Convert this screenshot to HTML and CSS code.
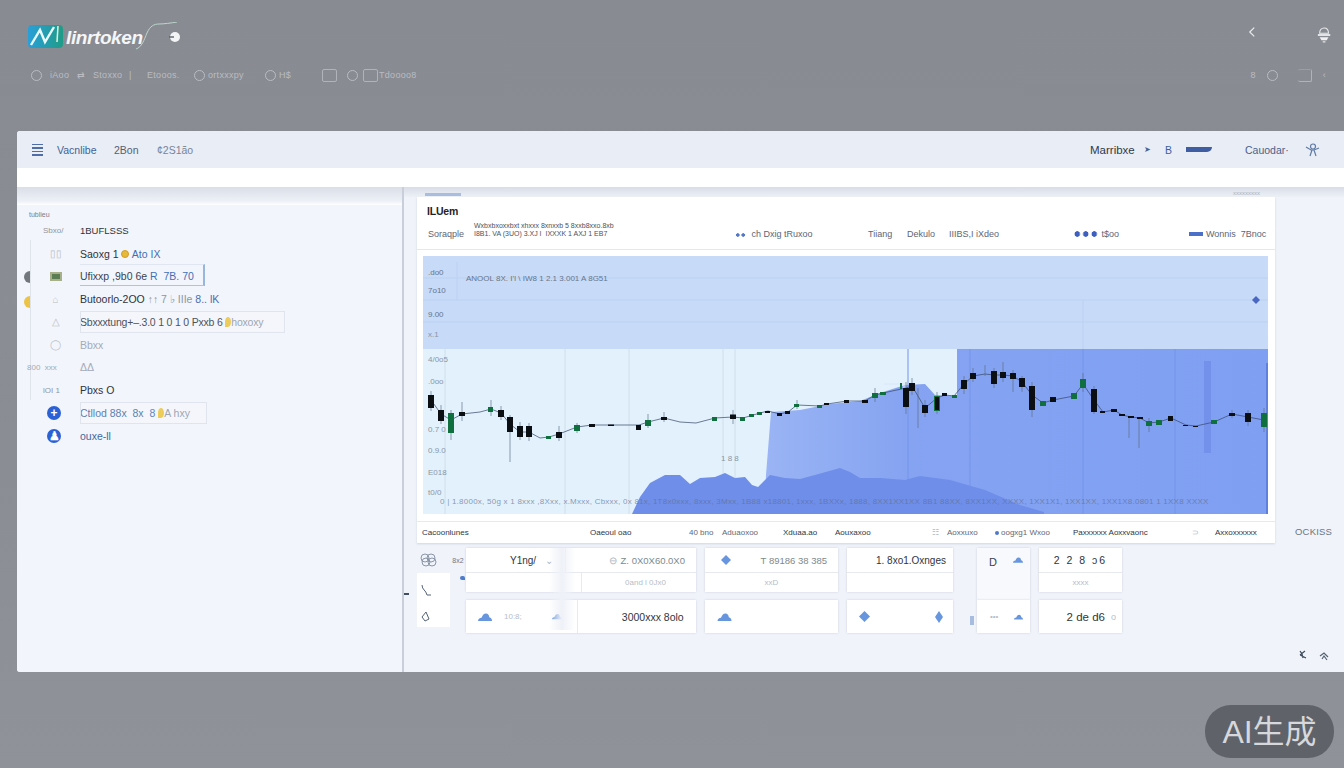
FILE: index.html
```html
<!DOCTYPE html>
<html lang="en">
<head>
<meta charset="utf-8">
<title>Mintoken</title>
<link rel="stylesheet" href="styles.css">
</head>
<body>
<svg class="defs" width="0" height="0" aria-hidden="true">
  <symbol id="cloud" viewBox="0 0 14 8"><path d="M0 8c0-2 1.500-3 3.500-3.200C4.500 2 6 .5 8 .5s3.200 1.800 3.300 3.800C13 4.600 14 6 14 8z"/></symbol>
  <symbol id="gem" viewBox="0 0 12 12" preserveAspectRatio="none"><path d="M6 0l6 6-6 6-6-6z"/></symbol>
</svg>

<header class="top">
  <div class="brand-row">
    <svg class="logo" width="160" height="30" viewBox="0 0 160 30">
      <defs><linearGradient id="lg" x1="0" x2="1"><stop offset="0" stop-color="#2a9fd8"/><stop offset="1" stop-color="#1f9c86"/></linearGradient></defs>
      <rect x="0" y="3" width="35" height="23" rx="4" fill="url(#lg)"/>
      <path d="M3 23L12 8l5 12 9-15" fill="none" stroke="#e8fbff" stroke-width="2.4"/>
      <path d="M30 4l-1 16" stroke="#e6f2d8" stroke-width="1.5"/>
      <path d="M108 27c6-2 8-9 11-16 3-7 7-9 12-9 5 0 12-1 18-2" fill="none" stroke="#bcd6cc" stroke-width="1"/>
      <circle cx="147" cy="15" r="5" fill="#f2f4f5"/>
      <path d="M141 15h5" stroke="#5d6168" stroke-width="1.4"/>
    </svg>
    <span class="wordmark">Iinrtoken</span>
    <svg class="chev" width="10" height="12" viewBox="0 0 10 12"><path d="M7 1L2 6l5 5" fill="none" stroke="#eceef0" stroke-width="1.3"/></svg>
    <svg class="lamp" width="16" height="20" viewBox="0 0 16 20"><path d="M3 8c0-4 2-6 5-6s5 2 5 6z" fill="none" stroke="#e8eaec" stroke-width="1.2"/><path d="M1 9h14v2H1z" fill="#eff0f2"/><path d="M3 12.500h10L11 16H5z" fill="#eff0f2"/><path d="M6.500 17h3v1.500h-3z" fill="#e0e2e4"/></svg>
  </div>
  <nav class="subnav">
    <span class="ring"></span><span class="n1">iAoo</span><span class="n2">⇄</span><span class="n3">Stoxxo</span><span class="n4">|</span><span class="n5">Etooos.</span>
    <span class="ring n6"></span><span class="n7">ortxxxpy</span><span class="ring n8"></span><span class="n9">H$</span>
    <span class="sq n10"></span><span class="ring n11"></span><span class="sq n12"></span><span class="n13">Tdoooo8</span>
    <span class="sub-right"><span>8</span><span class="ring"></span><span class="sq wide"></span><span>‹</span></span>
  </nav>
</header>

<section class="panel">
  <div class="bar">
    <span class="menu"><i></i><i></i><i></i><i></i></span>
    <span class="bar-link l1">Vacnlibe</span><span class="bar-link l2">2Bon</span><span class="bar-link l3">¢2S1ão</span>
    <span class="bar-right">
      <b class="mar">Marribxe</b><span class="arrow">➤</span><span class="bee">B</span><span class="flag"></span><span class="cal">Cauodar·</span>
      <svg width="15" height="14" viewBox="0 0 15 14"><circle cx="8" cy="3.500" r="2.500" fill="none" stroke="#5f7aa5" stroke-width="1.200"/><path d="M1 4l5 3 3 0 5-2M5 13l2-6M11 13L9 7" fill="none" stroke="#5f7aa5" stroke-width="1.200"/></svg>
    </span>
  </div>
  <div class="strip"></div>
  <div class="work">
    <aside class="side">
      <div class="side-shade"></div>
      <p class="side-cap">tublieu</p>
      <ul class="rows">
        <li><span class="ic txt">Sbxo/</span><span class="lab dark caps">1BUFLSSS</span></li>
        <li><span class="ic">▯▯</span><span class="lab dark">Saoxg 1 <i class="coin"></i> <em>Ato IX</em></span></li>
        <li class="boxed-blue"><span class="ic chip"></span><span class="lab">Ufixxp ,9b0 6e <em>R &nbsp;7B. 70</em></span></li>
        <li><span class="ic">⌂</span><span class="lab dark">Butoorlo-2OO <u>↑↑ 7 ♭ IIIe</u> <em>8.. lK</em></span></li>
        <li class="boxed"><span class="ic">△</span><span class="lab dark tight-lab">Sbxxxtung+–.3.0 1 0 1 0 Pxxb 6 <i class="tag"></i><u>hoxoxy</u></span></li>
        <li><span class="ic">◯</span><span class="lab faint">Bbxx</span></li>
        <li><span class="ic">&nbsp;</span><span class="lab faint">ΔΔ</span></li>
        <li><span class="ic txt">lOI 1</span><span class="lab dark">Pbxs O</span></li>
        <li class="boxed short"><span class="ic blue">+</span><span class="lab blue-lab">Ctllod 88x &nbsp;8x &nbsp;<em>8</em> <i class="tag"></i><u>A hxy</u></span></li>
        <li><span class="ic blue">♟</span><span class="lab blue-lab">ouxe-ll</span></li>
      </ul>
      <span class="rail"></span><span class="dot grey"></span><span class="dot amber"></span>
      <span class="side-note">800 &nbsp;xxx</span>
    </aside>

    <main class="main">
      <div class="shade"><i class="tab-line"></i><span class="shade-note">xxxxxxxxx</span></div>
      <div class="card-row">
        <article class="card">
          <h2 class="card-title">ILUem</h2>
          <div class="card-head">
            <span>Soraqple</span>
            <span class="two"><b>Wxbxbxoxxbxt xhxxx 8xnxxb 5 8xxb8xxo.8xb</b><br>I8B1. VA (3UO) 3.XJ I &nbsp;IXXXK 1 AXJ 1 EB7</span>
            <span><i class="dots"></i> ch Dxig tRuxoo</span>
            <span>Tiiang</span><span>Dekulo</span><span>IIIBS,I iXdeo</span>
            <span><i class="dots long"></i> t$oo</span>
            <span><i class="barlet"></i>Wonnis &nbsp;7Bnoc</span>
          </div>
          <div class="chart">
            <svg viewBox="423 256 845 258" width="845" height="258">
              <defs>
                <linearGradient id="areaL" x1="0" x2="1" y1="0" y2="0"><stop offset="0" stop-color="#9ab4f4"/><stop offset=".28" stop-color="#85a3f1"/><stop offset="1" stop-color="#7f9ff3"/></linearGradient>
              </defs>
              <rect x="423" y="256" width="845" height="93" fill="#c7daf8"/>
              <rect x="423" y="349" width="845" height="165" fill="#e2f1fc"/>
              <path class="grid-top" d="M423 278H1268M423 300H1268M423 322H1268M457 262V300M1083 300V349"/>
              <path class="grid" d="M445 349V514M565 349V514M629 349V514M723 349V514M735 349V514"/>
              <path d="M771 412L800 410 830 404 860 401 880 393 905 385 925 384 935 395 957 396V349H1268V514H765L766 475z" fill="url(#areaL)"/>
              <path class="grid-blue" d="M908 349V514M970 349V514M1083 349V514M1175 349V514"/>
              <rect x="1204" y="361" width="7" height="92" fill="#7391ea"/>
              <rect x="1266" y="363" width="3" height="151" fill="#5f80dc"/>
              <path d="M632 514L640 497 650 483 665 475 680 475 690 484 700 478 715 477 725 473 735 478 745 477 752 485 758 487 770 475 785 478 800 479 815 475 840 468 850 472 860 478 880 478 905 480 920 476 950 480 985 490 1020 505 1044 512V514z" fill="#6e8ee9"/>
              <path d="M884 383h22v24h-3v-22h-19z" fill="#dbe6f8" fill-opacity=".55"/>
              <text class="ax" x="428" y="275">.do0</text><text class="ax" x="428" y="293">7o10</text><text class="ax" x="428" y="317">9.00</text><text class="ax fa" x="428" y="337">x.1</text>
              <text class="ax" x="466" y="281">ANOOL 8X.  I'I \  IW8 1 2.1 3.001 A 8G51</text>
              <text class="ax fa" x="428" y="362">4/0o5</text><text class="ax fa" x="428" y="384">.0oo</text><text class="ax fa" x="428" y="432">0.7 0</text><text class="ax fa" x="428" y="453">0.9.0</text><text class="ax fa" x="428" y="475">E018</text><text class="ax fa" x="428" y="495">t0/0</text>
              <text class="axb" x="440" y="504">0 | 1.8000x, 50g x 1 8xxx ,8Xxx, x.Mxxx, Cbxxx, 0x 81x, 1T8x0xxx, 8xxx, 3Mxx, 1B88 x18801, 1xxx, 1BXXx, 1888, 8XX1XX1XX 8B1 88XX, 8XX1XX, XXXX, 1XX1X1, 1XX1XX, 1XX1X8.0801 1 1XX8 XXXX</text>
              <text class="ax fa" x="721" y="461">1 8 8</text>
              <path class="price" d="M431 400L441 414 451 420 462 414 480 412 491 409 501 413 510 424 520 432 529 432 540 438 549 437 559 434 577 427 592 425 611 425 639 425 648 422 664 418 680 422 696 423 715 418 733 417 743 418 760 413 768 411 780 414 788 412 797 405 820 406 827 404 847 401 865 401 875 395 883 393 906 388 912 386 925 408 937 398 945 395 954 396 964 384 973 376 985 374 994 375 1003 375 1013 376 1022 382 1032 395 1043 403 1053 400 1074 396 1083 384 1094 400 1103 412 1114 410 1122 415 1131 417 1140 418 1149 423 1159 422 1171 418 1186 425 1196 426 1214 422 1232 414 1248 417 1264 420"/>
              <path class="wick" d="M431 391V411M441 405V424M451 410V440M462 402V421M491 400V416M501 406V420M510 415V462M520 422V440M529 423V441M559 426V441M577 423V433M648 414V428M664 412V422M733 410V424M797 400V409M875 388V402M906 382V414M912 378V395M918 388V428M925 400V417M937 392V414M964 376V394M973 368V382M985 365V376M994 368V388M1003 362V382M1013 370V392M1022 376V392M1032 382V417M1083 373V392M1094 386V414M1129 416V438M1139 418V448M1149 418V432M1232 410V418M1248 410V426M1264 408V432"/>
              <path class="bull" d="M448 413h6v20h-6zM488 407h5v5h-5zM546 436h5v3h-5zM574 425h6v6h-6zM645 420h6v6h-6zM712 417h5v4h-5zM740 417h5v4h-5zM749 414h5v3h-5zM757 412h5v3h-5zM794 404h5v3h-5zM817 405h5v3h-5zM872 393h6v5h-6zM880 392h6v3h-6zM900 383h2v6h-2zM934 396h6v15h-6zM952 395h5v3h-5zM1040 401h6v5h-6zM1071 393h6v6h-6zM1080 379h6v9h-6zM1146 421h6v5h-6zM1156 420h6v5h-6zM1211 420h6v4h-6zM1261 413h6v14h-6z"/>
              <path class="bear" d="M428 395h6v13h-6zM438 410h6v11h-6zM459 412h6v4h-6zM498 410h6v7h-6zM507 417h6v15h-6zM517 426h6v11h-6zM526 426h6v11h-6zM556 432h6v6h-6zM589 424h6v3h-6zM608 424.500h6v1.500h-6zM636 425h5v5h-5zM661 417h6v3h-6zM730 414.500h6v4.500h-6zM765 411h5v2h-5zM777 413h5v3h-5zM785 411h5v3h-5zM824 403h5v2h-5zM844 400h5v3h-5zM862 400h6v3h-6zM903 388h6v19h-6zM909 383h6v8h-6zM922 405h6v8h-6zM935 397h4v13h-4zM942 393h5v3h-5zM961 380h6v9h-6zM970 373h6v6h-6zM991 371h6v13h-6zM1000 372h6v6h-6zM1010 373h6v6h-6zM1019 378h6v9h-6zM1029 386h6v24h-6zM1050 397h6v5h-6zM1091 389h6v23h-6zM1100 411h5v2h-5zM1111 409h6v3h-6zM1119 414h6v2h-6zM1128 416h6v2h-6zM1137 417h6v2h-6zM1168 416h5v5h-5zM1183 425h5v1h-5zM1193 426h5v1h-5zM1229 413h6v3h-6zM1245 413h6v9h-6z"/>
              <path d="M1256 296l4 4-4 4-4-4z" fill="#4a67c4"/>
            </svg>
          </div>
          <div class="card-foot">
            <b>Cacoonlunes</b><b>Oaeoul oao</b><span>40 bno</span><span>Aduaoxoo</span><b>Xduaa.ao</b><b>Aouxaxoo</b>
            <span class="fa">☷</span><span>Aoxxuxo</span><span><i class="mini"></i>oogxg1 Wxoo</span><b>Paxxxxxx Aoxxvaonc</b><span class="fa">⊃</span><b>Axxoxxxxxx</b>
          </div>
        </article>
        <span class="side-word">OCKISS</span>
      </div>

      <div class="lower">
        <div class="tools">
          <div class="tool-top">
            <svg width="17" height="14" viewBox="0 0 17 14"><g fill="none" stroke="#8b97a8"><circle cx="5" cy="5" r="4"/><circle cx="11" cy="5" r="4"/><circle cx="6" cy="9" r="4"/><circle cx="12" cy="9" r="4"/></g></svg>
          </div>
          <div class="tool-mid"><svg width="12" height="14" viewBox="0 0 12 14"><path d="M2 1c0 5 4 5 5 10h4" fill="none" stroke="#54627a"/></svg></div>
          <div class="tool-low"><svg width="9" height="11" viewBox="0 0 9 11"><path d="M5 1L1 6l3 4 4-2z" fill="none" stroke="#54627a"/></svg></div>
        </div>
        <span class="tool-note">8x2</span>

        <div class="tiles">
          <div class="col w229">
            <div class="tile split">
              <div class="t-row"><span class="dim right-a">Y1ng/ <small>⌄</small></span><span class="sep"></span><span class="muted"><small class="mini-dot">⊖</small>Z. 0X0X60.0X0</span></div>
              <div class="t-row low"><span></span><span class="sep"></span><span class="faint-t sub-a">0and l 0Jx0</span></div>
            </div>
            <div class="tile one">
              <svg class="ico" width="14" height="8"><use href="#cloud"/></svg><span class="faint-t wid">10:8;</span>
              <svg class="ico" width="10" height="7"><use href="#cloud"/></svg><span class="sep tall"></span><span class="dim big">3000xxx 8olo</span>
            </div>
            <span class="veil"></span>
          </div>
          <div class="col w133">
            <div class="tile split">
              <div class="t-row"><svg class="ico gem-a" width="10" height="10"><use href="#gem"/></svg><span class="muted">T 89186 38 385</span></div>
              <div class="t-row low center"><span class="faint-t">xxD</span></div>
            </div>
            <div class="tile one"><svg class="ico" width="15" height="8"><use href="#cloud"/></svg></div>
          </div>
          <div class="col w106">
            <div class="tile split">
              <div class="t-row end"><span class="dim">1. 8xo1.Oxnges</span></div>
              <div class="t-row low"></div>
            </div>
            <div class="tile one spread"><svg class="ico" width="11" height="11"><use href="#gem"/></svg><svg class="ico" width="8" height="12"><use href="#gem"/></svg></div>
          </div>
          <div class="col w53 tight">
            <div class="tile tall-tile"><span class="glyph">D</span><svg class="ico" width="10" height="6"><use href="#cloud"/></svg></div>
            <div class="tile short-tile spread"><span class="faint-t">•••</span><svg class="ico" width="9" height="8"><use href="#cloud"/></svg></div>
          </div>
          <div class="col w83">
            <div class="tile split">
              <div class="t-row center"><span class="dim wide-t">2 2 8 ↄ6</span></div>
              <div class="t-row low center"><span class="faint-t">xxxx</span></div>
            </div>
            <div class="tile one end"><span class="dim big-r">2 de d6</span><small class="o">o</small></div>
          </div>
        </div>
        <span class="dash"></span>
        <span class="fleck"></span>
        <span class="fleck-b"></span>
        <svg class="corner" width="34" height="14" viewBox="0 0 34 14"><path d="M3 6l5-4M3 2l2 3 1 4M3 6l6 3" fill="none" stroke="#3f4a5c" stroke-width="1.200"/><path d="M23 7l4-3 4 4M25 10l2-3 3 4" fill="none" stroke="#56616f" stroke-width="1.200"/></svg>
      </div>
    </main>
  </div>
</section>

<div class="badge">AI生成</div>
</body>
</html>
```
FILE: styles.css
```css
*, *::before, *::after { box-sizing: border-box; }
html, body { margin: 0; height: 768px; overflow: hidden; }
body {
  position: relative;
  background: linear-gradient(180deg, #888b92 0%, #8a8d94 60%, #8f9298 100%);
  font-family: "Liberation Sans", Arial, sans-serif;
  color: #2b3038;
}
.defs { position: absolute; }
em, i, u { font-style: normal; text-decoration: none; }
small { font-size: inherit; }

/* header on the grey backdrop */
.top { height: 131px; padding: 22px 13px 0 28px; }
.brand-row { display: flex; align-items: center; height: 30px; position: relative; }
.logo { flex: none; }
.wordmark {
  position: absolute; left: 38px; top: 4px;
  font: italic 700 19px/24px "Liberation Sans", sans-serif;
  color: #f4f6f8; letter-spacing: -.4px;
}
.chev { margin-left: 1060px; margin-top: -10px; }
.lamp { margin-left: 60px; margin-top: -4px; }
.subnav {
  display: flex; align-items: center; height: 14px; margin-top: 16px; margin-left: 3px;
  font-size: 9px; letter-spacing: .3px; color: #b9bcc2;
}
.ring { width: 11px; height: 11px; border: 1px solid #b9bcc2; border-radius: 50%; flex: none; }
.sq { width: 15px; height: 13px; border: 1px solid #b0b3b9; border-radius: 2px; flex: none; }
.n1 { margin-left: 8px; width: 27px; }
.n2 { width: 16px; }
.n3 { width: 36px; }
.n4 { width: 18px; }
.n5 { width: 47px; }
.n7 { margin-left: 3px; width: 57px; }
.n9 { margin-left: 3px; width: 43px; }
.n11 { margin-left: 10px; }
.n12 { margin-left: 5px; }
.n13 { margin-left: 1px; }
.sub-right { display: flex; align-items: center; gap: 11px; margin-left: auto; margin-right: 5px; }
.sub-right .wide { width: 14px; border-left: 0; border-top-color: #9a9da3; margin-left: 9px; }

/* panel */
.panel {
  margin-left: 17px; height: 541px; background: #f0f3fa;
  border-radius: 3px 0 0 3px; overflow: hidden;
}
.bar { display: flex; align-items: center; height: 37px; padding: 0 24px 0 15px; background: #e9edf6; font-size: 10.500px; }
.menu { display: flex; flex-direction: column; gap: 2px; width: 11px; }
.menu i { display: block; height: 1.500px; background: #4f6ea8; }
.bar-link { color: #4f6790; }
.l1 { margin-left: 14px; width: 57px; color: #3f6395; }
.l2 { width: 43px; color: #555f74; }
.l3 { color: #7a8495; }
.bar-right { display: flex; align-items: center; margin-left: auto; }
.mar { font-weight: 400; font-size: 11.500px; color: #2f3a4a; width: 54px; }
.arrow { font-size: 8px; color: #4a5f90; width: 21px; }
.bee { color: #3a5f9e; width: 21px; }
.flag { width: 26px; height: 5px; background: #3f5da3; margin-right: 33px; border-bottom-right-radius: 5px; }
.cal { color: #4a6288; width: 60px; }
.strip { height: 19px; background: #fff; }
.work { display: flex; height: 485px; }

/* sidebar */
.side { position: relative; width: 387px; flex: none; border-right: 2px solid #c8cfd9; background: #f2f5fb; }
.side-shade { height: 18px; background: linear-gradient(180deg, #d9dee8, #eef1f7 80%, #fff); }
.side-cap { margin: 5px 0 0 12px; font-size: 7px; line-height: 9px; color: #76808e; }
.rows { list-style: none; margin: .5px 0 0; padding: 0; }
.rows li { display: flex; align-items: center; height: 22.750px; position: relative; font-size: 10.500px; }
.ic { width: 63px; padding: 0 12px 0 26px; flex: none; color: #b8bec8; font-size: 10px; display: flex; justify-content: center; white-space: nowrap; }
.ic.txt { font-size: 8px; color: #8d95a2; justify-content: flex-start; }
.ic.chip::after { content: ""; flex: none; width: 12px; height: 9px; background: #5b7d55; border: 2px solid #a8b08a; }
.ic.blue {
  width: 14px; height: 14px; margin: 0 19px 0 30px; padding: 0; border-radius: 50%;
  background: #2c61d6; color: #fff; font: 700 12px/14px "Liberation Sans", sans-serif; justify-content: center;
}
.lab { white-space: nowrap; color: #3c4450; }
.lab.dark { color: #2d3340; }
.lab.caps { font-size: 9.500px; }
.tight-lab { letter-spacing: -.2px; }
.lab.faint { color: #a3abb8; }
.lab em { color: #3f6fb5; }
.lab u { color: #8d96a5; }
.blue-lab { color: #3d6a9f; }
.coin { display: inline-block; width: 8px; height: 8px; border-radius: 50%; background: #e5b93a; border: 1px solid #d69b20; }
.tag { display: inline-block; width: 6px; height: 10px; border-radius: 50% 50% 50% 0; background: #e9c33f; vertical-align: -1px; }
.boxed::after, .boxed-blue::after {
  content: ""; position: absolute; left: 63px; top: 0; height: 22px; pointer-events: none;
}
.boxed::after { width: 205px; border: 1px solid #e0e4ec; background: rgba(255,255,255,.15); }
.boxed.short::after { width: 127px; }
.boxed-blue::after { width: 125px; top: -1px; border-bottom: 1px solid #aac4e6; border-right: 2px solid #98b6dd; border-top: 1px solid #e0e6ef; }
.rail { position: absolute; left: 13px; top: 53px; width: 1px; height: 160px; background: #dfe3ea; }
.dot { position: absolute; left: 7px; width: 6px; height: 12px; border-radius: 6px 0 0 6px; }
.dot.grey { top: 84px; background: #72767d; }
.dot.amber { top: 109px; background: #ecc344; }
.side-note { position: absolute; left: 10px; top: 176px; font-size: 8px; color: #a4abb6; }

/* main */
.main { position: relative; flex: 1; min-width: 0; padding-left: 13px; }
.shade { position: relative; height: 10px; margin-left: -13px; background: linear-gradient(180deg, #d8dde7, #edf0f6); }
.tab-line { position: absolute; left: 21px; top: 6px; width: 36px; height: 3px; background: #a9bddf; }
.shade-note { position: absolute; left: 829px; top: 2px; font-size: 6px; line-height: 9px; color: #aab1bd; }
.card-row { display: flex; align-items: flex-end; }
.card { width: 858px; flex: none; background: #fff; box-shadow: 0 1px 2px rgba(150,160,180,.35); }
.card-title { margin: 0; padding: 8px 0 0 10px; height: 20px; font-size: 10.500px; line-height: 12px; font-weight: 700; letter-spacing: -.2px; color: #1e2329; }
.card-head {
  display: grid; grid-template-columns: 46px 261px 133px 39px 42px 124px 116px 1fr; align-items: center;
  height: 33px; padding: 2px 0 0 11px; border-bottom: 1px solid #e4e7ed; font-size: 9px; color: #5d6674; white-space: nowrap;
}
.two { font-size: 7px; line-height: 8px; margin-bottom: 8px; color: #4a5260; }
.two b { font-weight: 400; }
.dots { display: inline-block; width: 11px; height: 4px; margin-right: 3px; background: radial-gradient(circle, #5478c8 1.500px, transparent 2px) 0 0/5.500px 4px repeat-x; }
.dots.long { width: 25px; height: 6px; margin-right: 1px; background: radial-gradient(circle, #3d5fc0 2.500px, transparent 3px) 0 0/8.500px 6px repeat-x; }
.barlet { display: inline-block; width: 14px; height: 4px; margin-right: 3px; background: #4b70c8; vertical-align: 1px; }
.chart { height: 271px; padding: 6px 0 7px 6px; }
.chart svg { display: block; }
.ax { font: 8px "Liberation Sans", sans-serif; fill: #66758c; }
.ax.fa { fill: #8996a8; }
.axb { font: 8px "Liberation Sans", sans-serif; fill: #5f6f8f; fill-opacity: .7; letter-spacing: .24px; }
.grid-top { stroke: #bcd0f1; stroke-width: 1; fill: none; }
.grid { stroke: #d0deea; stroke-width: 1; fill: none; }
.grid-blue { stroke: #7594ea; stroke-width: 1; fill: none; }
.price { fill: none; stroke: #36476a; stroke-width: 1; stroke-opacity: .7; }
.wick { fill: none; stroke: #5d6b80; stroke-width: 1; stroke-opacity: .65; }
.bull { fill: #0f6f3e; }
.bear { fill: #0b0f14; }
.card-foot {
  display: grid; grid-template-columns: 168px 99px 33px 61px 52px 97px 15px 48px 78px 119px 23px 1fr;
  align-items: center; height: 22px; padding-left: 5px; border-top: 1px solid #e7e9ee;
  font-size: 8px; white-space: nowrap; color: #5f6876;
}
.card-foot b { font-weight: 400; color: #2f3643; }
.fa { color: #aab2bf; }
.mini { display: inline-block; width: 4px; height: 4px; margin-right: 2px; border-radius: 50%; background: #5078c9; }
.side-word { margin: 0 0 6px 20px; font-size: 9.500px; letter-spacing: .2px; color: #6b7584; }

/* lower tiles */
.lower { position: relative; display: flex; margin-top: 5px; }
.tools { width: 33px; flex: none; display: flex; flex-direction: column; }
.tool-top { height: 25px; padding: 5px 3px; }
.tool-mid { height: 27px; background: #fff; padding: 11px 3px 0; }
.tool-low { height: 27px; background: #fff; padding: 8px 4px 0; }
.tool-note { width: 16px; margin-top: 8px; font-size: 7px; line-height: 10px; color: #6f7885; text-align: center; flex: none; }
.tiles { display: flex; gap: 9px; }
.col { position: relative; display: flex; flex-direction: column; gap: 8px; }
.w229 { width: 230px; }
.w133 { width: 133px; }
.w106 { width: 106px; margin-right: 15px; }
.w53 { width: 53px; }
.w83 { width: 83px; }
.tight { gap: 0; }
.tile { background: #fff; box-shadow: 0 0 2px rgba(160,170,190,.45); font-size: 10px; color: #69717e; }
.split { height: 44px; display: flex; flex-direction: column; }
.t-row { display: flex; align-items: center; justify-content: space-between; height: 25px; padding: 0 11px 0 20px; border-bottom: 1px solid #e6e9ef; white-space: nowrap; }
.t-row.low { height: 19px; border-bottom: 0; font-size: 9px; }
.t-row.center { justify-content: center; padding: 0; }
.t-row.end { justify-content: flex-end; padding-right: 7px; }
.one { height: 33px; display: flex; align-items: center; padding: 0 10px 0 12px; white-space: nowrap; }
.spread { justify-content: space-between; }
.end { justify-content: flex-end; }
.ico { fill: #6796de; flex: none; }
.dim { color: #2f3540; }
.big { font-size: 10.500px; }
.big-r { font-size: 11.500px; }
.muted { color: #7c8a8c; font-size: 9.500px; }
.faint-t { color: #b7bdc8; font-size: 8px; }
.right-a { margin-left: 24px; }
.right-a small { color: #aeb4bf; margin-left: 6px; }
.sep { width: 1px; align-self: stretch; background: #e7eaf0; margin-left: auto; margin-right: 43px; }
.sep.tall { margin-right: 44px; margin-left: 15px; }
.mini-dot { color: #aeb4bf; margin-right: 4px; }
.sub-a { margin-right: 19px; }
.wid { margin: 0 30px 0 12px; }
.gem-a { margin-left: -4px; }
.wide-t { letter-spacing: 2px; font-size: 10.500px; }
.veil { position: absolute; left: 83px; top: 0; width: 26px; height: 82px; background: linear-gradient(90deg, rgba(240,243,250,0), #eef1f7 50%, rgba(240,243,250,0)); }
.tall-tile { height: 52px; display: flex; align-items: flex-start; justify-content: space-between; padding: 9px 7px 0 12px; background: #f8f9fc; }
.glyph { font-size: 11px; color: #39424f; line-height: 10px; }
.short-tile { height: 33px; display: flex; align-items: center; padding: 0 7px 0 13px; }
.o { color: #b6bfd0; margin-left: 6px; margin-right: -4px; font-size: 9px; }
.dash { position: absolute; left: -13px; top: 45px; width: 5px; height: 2px; background: #3f4d66; }
.fleck { position: absolute; left: 553px; top: 68px; width: 4px; height: 9px; background: #a7bcdf; }
.fleck-b { position: absolute; left: 43px; top: 28px; width: 5px; height: 4px; border-radius: 3px 3px 0 3px; background: #4f7cc9; }
.corner { position: absolute; left: 880px; top: 101px; }

/* watermark */
.badge {
  position: absolute; left: 1205px; top: 705px; width: 129px; height: 53px;
  display: flex; align-items: center; justify-content: center;
  border-radius: 26px; background: #5f6269; color: #d6d8db;
  font: 32px/1 "Liberation Sans", "Noto Sans CJK SC", sans-serif;
}
```
